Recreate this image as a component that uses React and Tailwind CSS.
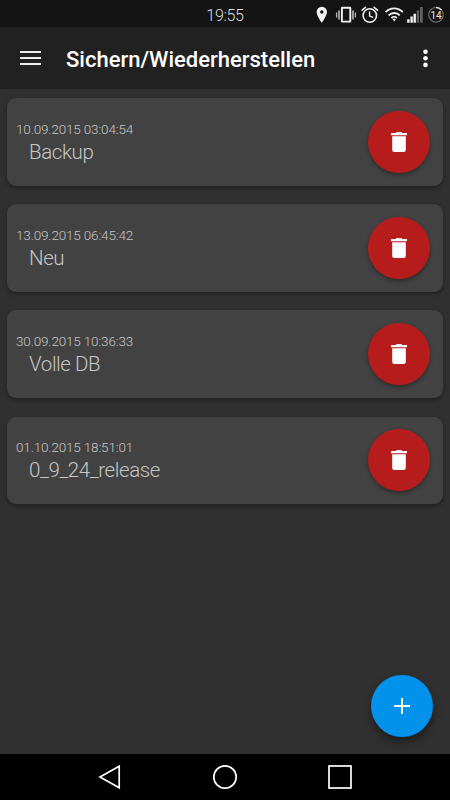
const backups = [
  { date: "10.09.2015 03:04:54", name: "Backup" },
  { date: "13.09.2015 06:45:42", name: "Neu" },
  { date: "30.09.2015 10:36:33", name: "Volle DB" },
  { date: "01.10.2015 18:51:01", name: "0_9_24_release" },
];

function StatusIcons() {
  return (
    <svg width="130" height="27" viewBox="315 0 130 27" fill="none">
      {/* Location */}
      <path fillRule="evenodd" d="M321.800 5.800a5.200 5.200 0 0 0-5.200 5.200c0 3.800 5.200 10.800 5.200 10.800s5.200-7 5.200-10.800a5.200 5.200 0 0 0-5.200-5.200zm0 3.500a1.700 1.700 0 1 1 0 3.400 1.700 1.700 0 0 1 0-3.400z" fill="#f2f2f2" />
      {/* Vibrate */}
      <rect x="341.900" y="6.800" width="8.400" height="13.800" rx="0.400" stroke="#f2f2f2" strokeWidth="1.900" />
      <path d="M339 9.500v9M353 9.500v9" stroke="#d0d0d0" strokeWidth="1.400" />
      <path d="M336.600 11.500v5M355.400 11.500v5" stroke="#b5b5b5" strokeWidth="1.300" />
      {/* Alarm */}
      <circle cx="369.800" cy="14.500" r="6.700" stroke="#f2f2f2" strokeWidth="1.600" />
      <path d="M361.600 9.600l4.400-3.700M378 9.600l-4.400-3.700" stroke="#f2f2f2" strokeWidth="1.500" />
      <path d="M369.600 10.500v4.600l3.600 1.200" stroke="#f2f2f2" strokeWidth="1.400" />
      {/* Wifi */}
      <path d="M385.600 11.200c4.800-5.100 12.400-5.100 17.200 0M388.600 14.300c3-3.100 8.200-3.100 11.200 0M391.500 17c1.500-1.500 3.900-1.500 5.400 0" stroke="#f2f2f2" strokeWidth="1.800" />
      <path d="M392.600 18.200l1.600 2.300 1.600-2.300c-.9-.8-2.300-.8-3.200 0z" fill="#f2f2f2" />
      {/* Signal */}
      <path d="M407.200 18.200h2.400v3.500h-2.400zM410.400 15.400h2.400v6.300h-2.400zM413.500 12.700h2.400v9h-2.400z" fill="#f2f2f2" />
      <path d="M416.700 9.500h2.400v12.200h-2.400zM420 6h2.800v15.700H420z" fill="#606060" />
      {/* Battery */}
      <circle cx="436" cy="13.800" r="7.300" stroke="#6a6a6a" strokeWidth="1.200" />
      <path d="M436 6.500a7.300 7.300 0 0 1 5.500 2.500" stroke="#e8dcdc" strokeWidth="1.500" />
      <text x="436" y="17.500" textAnchor="middle" fontFamily="Roboto, sans-serif" fontSize="10" fill="#e6e6e6">14</text>
    </svg>
  );
}

function StatusBar() {
  return (
    <div className="h-[27px] shrink-0 bg-[#141414] grid grid-cols-[1fr_auto_1fr] items-center">
      <span />
      <span className="pt-[2px] text-[16px] leading-[27px] font-light tracking-[-0.300px] text-[#dedede]">19:55</span>
      <div className="flex justify-end pr-[5px]">
        <StatusIcons />
      </div>
    </div>
  );
}

function Toolbar() {
  return (
    <header className="h-[62px] shrink-0 bg-[#212121] flex items-center pl-5 pr-[22px]">
      <button aria-label="Menu" className="flex flex-col gap-1">
        <span className="block w-[21px] h-[2px] bg-[#eeeeee]" />
        <span className="block w-[21px] h-[2px] bg-[#eeeeee]" />
        <span className="block w-[21px] h-[2px] bg-[#eeeeee]" />
      </button>
      <h1 className="flex-1 pl-[25px] pt-[3px] text-[22px] leading-7 font-medium text-white whitespace-nowrap">
        Sichern/Wiederherstellen
      </h1>
      <button aria-label="More">
        <svg width="5" height="19" viewBox="0 0 5 19" fill="#fff" className="block">
          <circle cx="2.500" cy="2.700" r="2.300" />
          <circle cx="2.500" cy="9.300" r="2.300" />
          <circle cx="2.500" cy="15.900" r="2.300" />
        </svg>
      </button>
    </header>
  );
}

function BackupCard({ backup }) {
  return (
    <li className="h-[87.500px] flex items-center justify-between rounded-[9px] bg-[#424242] pl-[9px] pr-[13px] shadow-[0_2px_4px_rgba(0,0,0,0.35)]">
      <div className="pt-[2px] font-light text-[#c6c6c6]">
        <div className="text-[13.500px] leading-[18px] tracking-[-0.170px]">{backup.date}</div>
        <div className="pl-[13px] text-[20.500px] leading-7 tracking-[-0.400px]">{backup.name}</div>
      </div>
      <button
        aria-label="Delete"
        className="size-[62px] rounded-full bg-[#b71c1c] flex items-center justify-center shadow-[0_2px_4px_rgba(0,0,0,0.35)]"
      >
        <svg width="16" height="20" viewBox="0 0 16 20" fill="#fff">
          <path d="M0 .9h4.800L5.800 0h4.400l1 .9H16v2.300H0zM1.200 4.200h13.600v13.500c0 1.300-1 2.300-2.300 2.300h-9c-1.300 0-2.300-1-2.300-2.300z" />
        </svg>
      </button>
    </li>
  );
}

function NavBar() {
  return (
    <nav className="h-[46px] shrink-0 bg-black flex items-center justify-between px-[98px]">
      <svg width="24" height="26" viewBox="0 0 24 26" fill="none" stroke="#fff" strokeWidth="1.700">
        <path d="M2 13L21.200 2.300v21.400z" />
      </svg>
      <svg width="26" height="26" viewBox="0 0 26 26" fill="none" stroke="#fff" strokeWidth="1.700">
        <circle cx="13" cy="13" r="11.200" />
      </svg>
      <svg width="24" height="26" viewBox="0 0 24 26" fill="none" stroke="#fff" strokeWidth="1.700">
        <rect x="1" y="2" width="22" height="22" />
      </svg>
    </nav>
  );
}

export default function App() {
  return (
    <div className="relative w-[450px] h-[800px] overflow-hidden flex flex-col bg-[#303030] font-['Roboto',sans-serif]">
      <StatusBar />
      <Toolbar />
      <main className="flex-1 px-[7px] pt-[9px]">
        <ul className="flex flex-col gap-[18.700px]">
          {backups.map((backup) => (
            <BackupCard key={backup.date} backup={backup} />
          ))}
        </ul>
      </main>
      <NavBar />

      {/* Floating Action Button */}
      <button
        aria-label="Add"
        className="absolute right-[17px] bottom-[63px] size-[62px] rounded-full bg-[#0292ec] flex items-center justify-center shadow-[0_5px_9px_rgba(0,0,0,0.4)]"
      >
        <svg width="16" height="16" viewBox="0 0 16 16" stroke="#fff" strokeWidth="2">
          <path d="M0 8h16M8 0v16" />
        </svg>
      </button>
    </div>
  );
}
